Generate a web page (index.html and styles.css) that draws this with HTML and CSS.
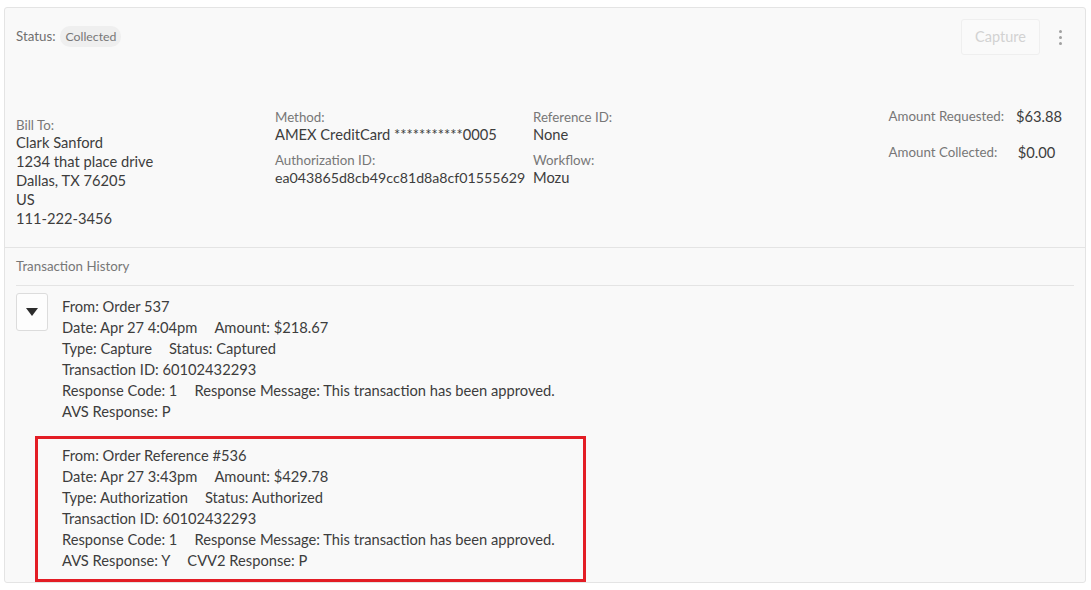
FILE: index.html
```html
<!DOCTYPE html>
<html>
<head>
<meta charset="utf-8">
<link rel="stylesheet" href="styles.css">
</head>
<body>
<div class="card">
  <div class="header">
    <div class="status">
      <span class="status-label">Status:</span>
      <span class="pill">Collected</span>
    </div>
    <div class="actions">
      <button class="btn-capture" disabled>Capture</button>
      <button class="kebab" aria-label="More"><span></span><span></span><span></span></button>
    </div>
  </div>

  <div class="info">
    <div class="col bill">
      <div class="label">Bill To:</div>
      <div class="line">Clark Sanford</div>
      <div class="line">1234 that place drive</div>
      <div class="line">Dallas, TX 76205</div>
      <div class="line">US</div>
      <div class="line">111-222-3456</div>
    </div>
    <div class="col method">
      <div class="field">
        <div class="label">Method:</div>
        <div class="line">AMEX CreditCard ***********0005</div>
      </div>
      <div class="field">
        <div class="label">Authorization ID:</div>
        <div class="line hash">ea043865d8cb49cc81d8a8cf01555629</div>
      </div>
    </div>
    <div class="col ref">
      <div class="field">
        <div class="label">Reference ID:</div>
        <div class="line">None</div>
      </div>
      <div class="field">
        <div class="label">Workflow:</div>
        <div class="line">Mozu</div>
      </div>
    </div>
    <div class="amounts">
      <div class="amount-row"><span class="label">Amount Requested:</span><span class="value">$63.88</span></div>
      <div class="amount-row"><span class="label">Amount Collected:</span><span class="value">$0.00</span></div>
    </div>
  </div>

  <div class="history">
    <div class="history-title">Transaction History</div>
    <div class="history-body">
      <button class="toggle" aria-label="Collapse"><span class="tri"></span></button>
      <div class="entries">
        <div class="entry">
          <div class="row"><span>From: Order 537</span></div>
          <div class="row"><span>Date: Apr 27 4:04pm</span><span>Amount: $218.67</span></div>
          <div class="row"><span>Type: Capture</span><span>Status: Captured</span></div>
          <div class="row"><span>Transaction ID: 60102432293</span></div>
          <div class="row"><span>Response Code: 1</span><span>Response Message: This transaction has been approved.</span></div>
          <div class="row"><span>AVS Response: P</span></div>
        </div>
        <div class="entry highlighted">
          <div class="row"><span>From: Order Reference #536</span></div>
          <div class="row"><span>Date: Apr 27 3:43pm</span><span>Amount: $429.78</span></div>
          <div class="row"><span>Type: Authorization</span><span>Status: Authorized</span></div>
          <div class="row"><span>Transaction ID: 60102432293</span></div>
          <div class="row"><span>Response Code: 1</span><span>Response Message: This transaction has been approved.</span></div>
          <div class="row"><span>AVS Response: Y</span><span>CVV2 Response: P</span></div>
        </div>
      </div>
    </div>
  </div>
</div>
</body>
</html>
```

FILE: styles.css
```css
* { box-sizing: border-box; }
html, body {
  margin: 0;
  padding: 0;
  background: #ffffff;
}
body {
  font-family: "Lato", "Liberation Sans", sans-serif;
  color: #3d3d3d;
  font-size: 14.7px;
  padding: 7px 5px 0 4px;
}
.card {
  background: #f9f9f9;
  border: 1px solid #e4e4e4;
  border-radius: 3px;
  height: 576px;
  overflow: visible;
}
.header {
  display: flex;
  justify-content: space-between;
  align-items: center;
  padding: 11px 15px 0 11px;
}
.status {
  display: flex;
  align-items: center;
  gap: 5px;
  font-size: 13.3px;
  color: #6f6f6f;
  margin-top: -2px;
}
.pill {
  background: #efefef;
  border-radius: 10px;
  padding: 3px 5px;
  font-size: 12.3px;
  color: #777;
}
.actions {
  display: flex;
  align-items: center;
  gap: 10px;
}
.btn-capture {
  font-family: inherit;
  font-size: 14.5px;
  color: #d2d2d2;
  background: #fafafa;
  border: 1px solid #efefef;
  border-radius: 3px;
  width: 79px;
  height: 36px;
  padding: 0 0 2px;
}
.kebab {
  width: 20px;
  height: 24px;
  background: transparent;
  border: none;
  display: flex;
  flex-direction: column;
  align-items: center;
  justify-content: center;
  gap: 3px;
  padding: 0;
}
.kebab span {
  width: 3px;
  height: 3px;
  border-radius: 50%;
  background: #a0a0a0;
}
.info {
  display: flex;
  padding: 55px 23px 19px 11px;
  border-bottom: 1px solid #e4e4e4;
}
.col .label, .amounts .label {
  color: #777;
  font-size: 13.3px;
}
.label { line-height: 15px; }
.line { line-height: 19px; white-space: nowrap; }
.hash { font-size: 14.2px; }
.bill {
  width: 259px;
  padding-top: 8px;
}
.method { width: 258px; }
.field + .field { margin-top: 9px; }
.ref { flex: 1; }
.amounts {
  display: flex;
  flex-direction: column;
  gap: 17px;
  margin-top: -3px;
}
.amount-row {
  display: flex;
  align-items: center;
  line-height: 19px;
}
.amount-row .label {
  flex: 0 0 auto;
}
.amount-row .value {
  width: 58px;
  text-align: right;
}
.history {
  padding: 0 11px 0 11px;
}
.history-title {
  font-size: 13.3px;
  color: #777;
  line-height: 17px;
  padding: 10px 0 10px;
  border-bottom: 1px solid #e4e4e4;
}
.history-body {
  display: flex;
  gap: 14px;
  padding-top: 7px;
}
.toggle {
  width: 32px;
  height: 38px;
  background: #fdfdfd;
  border: 1px solid #dcdcdc;
  border-radius: 3px;
  display: flex;
  align-items: center;
  justify-content: center;
  padding: 0;
  flex: 0 0 auto;
}
.tri {
  width: 0;
  height: 0;
  border-left: 6px solid transparent;
  border-right: 6px solid transparent;
  border-top: 8px solid #2c2c2c;
}
.entries {
  display: flex;
  flex-direction: column;
  padding-top: 3px;
}
.row {
  display: flex;
  gap: 17px;
  line-height: 21px;
}
.entry.highlighted {
  margin-top: 14px;
  margin-left: -27px;
  align-self: flex-start;
  border: 3px solid #e31d25;
  padding: 6px 28px 8px 24px;
}
```
